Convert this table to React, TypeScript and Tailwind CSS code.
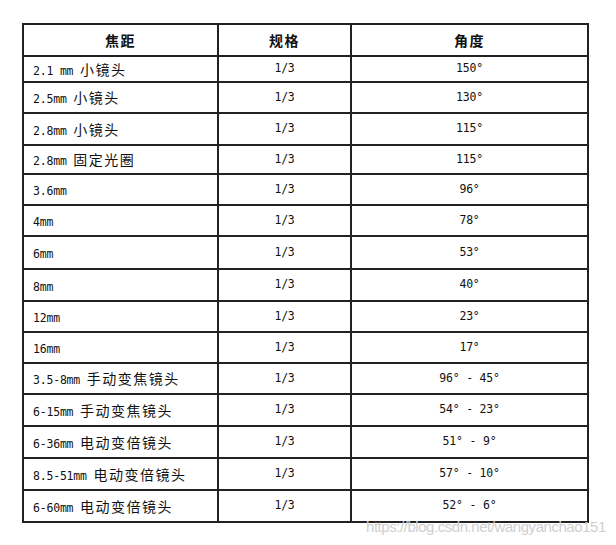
const rows: [string, string, string][] = [
  ["2.1 mm ", "小镜头", "150°"],
  ["2.5mm ", "小镜头", "130°"],
  ["2.8mm ", "小镜头", "115°"],
  ["2.8mm ", "固定光圈", "115°"],
  ["3.6mm", "", "96°"],
  ["4mm", "", "78°"],
  ["6mm", "", "53°"],
  ["8mm", "", "40°"],
  ["12mm", "", "23°"],
  ["16mm", "", "17°"],
  ["3.5-8mm ", "手动变焦镜头", "96° - 45°"],
  ["6-15mm ", "手动变焦镜头", "54° - 23°"],
  ["6-36mm ", "电动变倍镜头", "51° - 9°"],
  ["8.5-51mm ", "电动变倍镜头", "57° - 10°"],
  ["6-60mm ", "电动变倍镜头", "52° - 6°"],
];

// measured row heights from the screenshot
const heights = [26, 31, 32, 29, 31, 31, 33, 32, 31, 31, 31, 32, 32, 32, 32];

const mono = "font-['DejaVu_Sans_Mono',monospace] text-[11.5px] tracking-[-0.2px]";
const cjk = "font-['Noto_Sans_CJK_SC',sans-serif] text-[14px] tracking-[1.5px]";

const App = () => {
  return (
    <div className="relative w-[616px] h-[545px] bg-white text-[#111] overflow-hidden">
      <div className="pt-[23px] pl-[22px]">
        <div className="grid grid-cols-[195px_133px_237px] w-max border-l-2 border-t-2 border-[#222]">
          {/* header */}
          <div className={`h-[32px] flex items-center justify-center border-r-2 border-b-2 border-[#222] font-semibold ${cjk}`}>
            焦距
          </div>
          <div className={`h-[32px] flex items-center justify-center border-r-2 border-b-2 border-[#222] font-semibold ${cjk}`}>
            规格
          </div>
          <div className={`h-[32px] flex items-center justify-center border-r-2 border-b-2 border-[#222] font-semibold ${cjk}`}>
            角度
          </div>

          {rows.map(([size, name, angle], i) => (
            <div key={i} className="contents">
              <div
                className="flex items-center pl-[9px] border-r-2 border-b-2 border-[#222] whitespace-pre"
                style={{ height: heights[i] }}
              >
                <span className="leading-none">
                  <span className={mono}>{size}</span>
                  {name && <span className={cjk}>{name}</span>}
                </span>
              </div>
              <div
                className={`flex items-center justify-center border-r-2 border-b-2 border-[#222] ${mono}`}
                style={{ height: heights[i] }}
              >
                1/3
              </div>
              <div
                className={`flex items-center justify-center border-r-2 border-b-2 border-[#222] whitespace-pre ${mono}`}
                style={{ height: heights[i] }}
              >
                {angle}
              </div>
            </div>
          ))}
        </div>
      </div>

      {/* watermark */}
      <div className="absolute left-[366px] top-[516px] font-['Liberation_Sans',sans-serif] text-[15px] tracking-[-0.45px] text-[#cfcfcf] whitespace-nowrap">
        https://blog.csdn.net/wangyanchao151
      </div>
    </div>
  );
};

export default App;
